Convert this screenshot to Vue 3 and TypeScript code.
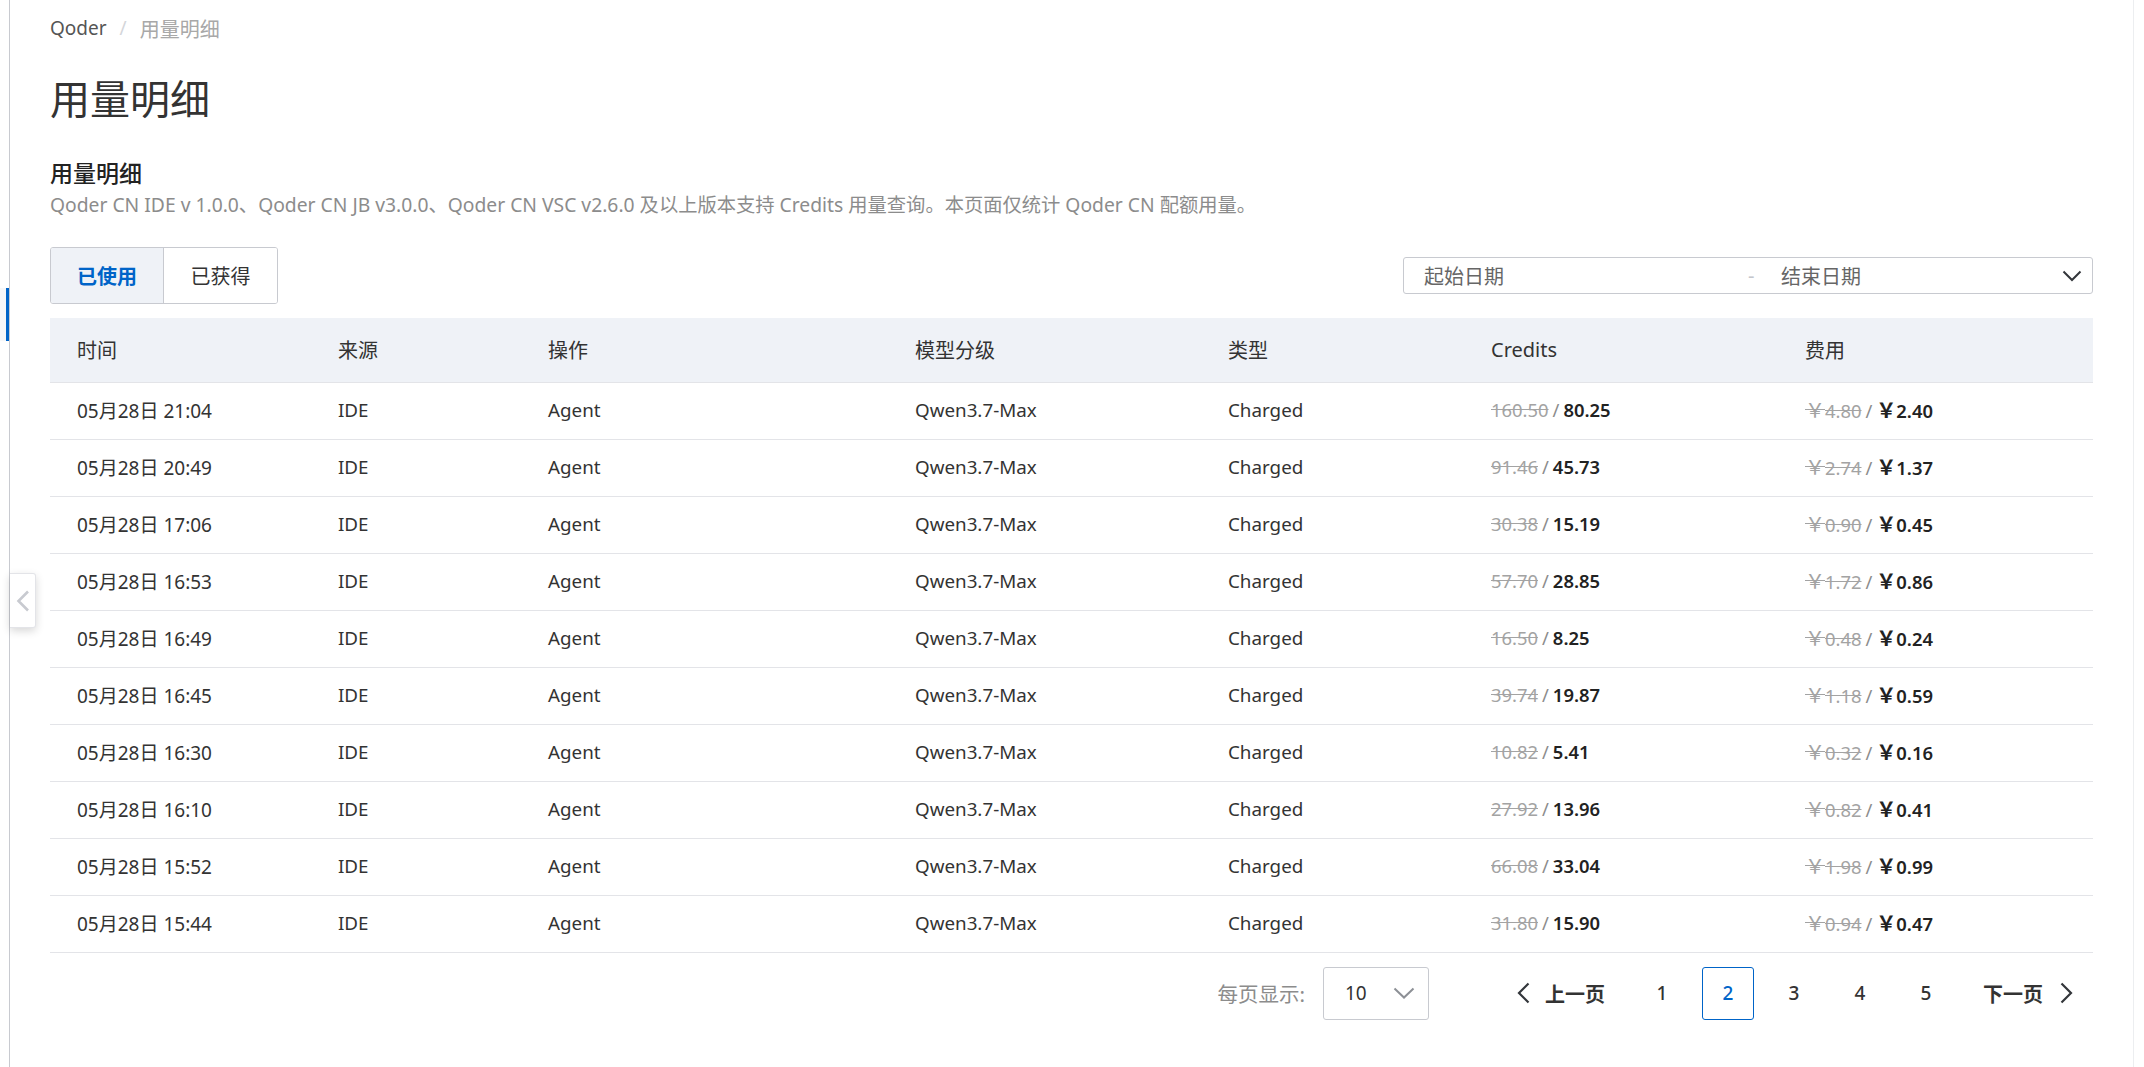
<script setup lang="ts">
interface UsageRow {
  time: string
  oldCredits: string
  credits: string
  oldFee: string
  fee: string
}

const columns = ['时间', '来源', '操作', '模型分级', '类型', 'Credits', '费用']

const rows: UsageRow[] = [
  { time: '05月28日 21:04', oldCredits: '160.50', credits: '80.25', oldFee: '4.80', fee: '2.40' },
  { time: '05月28日 20:49', oldCredits: '91.46', credits: '45.73', oldFee: '2.74', fee: '1.37' },
  { time: '05月28日 17:06', oldCredits: '30.38', credits: '15.19', oldFee: '0.90', fee: '0.45' },
  { time: '05月28日 16:53', oldCredits: '57.70', credits: '28.85', oldFee: '1.72', fee: '0.86' },
  { time: '05月28日 16:49', oldCredits: '16.50', credits: '8.25', oldFee: '0.48', fee: '0.24' },
  { time: '05月28日 16:45', oldCredits: '39.74', credits: '19.87', oldFee: '1.18', fee: '0.59' },
  { time: '05月28日 16:30', oldCredits: '10.82', credits: '5.41', oldFee: '0.32', fee: '0.16' },
  { time: '05月28日 16:10', oldCredits: '27.92', credits: '13.96', oldFee: '0.82', fee: '0.41' },
  { time: '05月28日 15:52', oldCredits: '66.08', credits: '33.04', oldFee: '1.98', fee: '0.99' },
  { time: '05月28日 15:44', oldCredits: '31.80', credits: '15.90', oldFee: '0.94', fee: '0.47' }
]

const pages = [1, 2, 3, 4, 5]
const currentPage = 2
</script>

<template>
  <div class="page">
    <aside class="rail">
      <div class="rail-active"></div>
      <button class="collapse" type="button">
        <svg width="14" height="22" viewBox="0 0 14 22"><path d="M12 1.500 2.500 11l9.500 9.500" fill="none" stroke="#c8cad0" stroke-width="2.600" /></svg>
      </button>
    </aside>

    <main class="content">
      <nav class="crumbs">
        <span>Qoder</span>
        <span class="crumb-sep">/</span>
        <span class="crumb-current">用量明细</span>
      </nav>
      <h1 class="title">用量明细</h1>
      <h2 class="subtitle">用量明细</h2>
      <p class="desc">Qoder CN IDE v 1.0.0、Qoder CN JB v3.0.0、Qoder CN VSC v2.6.0 及以上版本支持 Credits 用量查询。本页面仅统计 Qoder CN 配额用量。</p>

      <div class="toolbar">
        <div class="tabs">
          <button class="tab tab-on" type="button">已使用</button>
          <button class="tab" type="button">已获得</button>
        </div>
        <div class="range">
          <span class="range-start">起始日期</span>
          <span class="range-dash">-</span>
          <span class="range-end">结束日期</span>
          <svg width="20" height="12" viewBox="0 0 20 12"><path d="M1.500 1.500 10 10l8.500-8.500" fill="none" stroke="#33363b" stroke-width="2" /></svg>
        </div>
      </div>

      <table class="usage">
        <colgroup>
          <col class="col-time" />
          <col class="col-source" />
          <col class="col-action" />
          <col class="col-model" />
          <col class="col-type" />
          <col class="col-credits" />
          <col />
        </colgroup>
        <thead>
          <tr>
            <th v-for="col in columns" :key="col">{{ col }}</th>
          </tr>
        </thead>
        <tbody>
          <tr v-for="row in rows" :key="row.time">
            <td class="time">{{ row.time }}</td>
            <td>IDE</td>
            <td>Agent</td>
            <td>Qwen3.7-Max</td>
            <td>Charged</td>
            <td class="money"><s class="old">{{ row.oldCredits }}</s><span class="slash">/</span><b>{{ row.credits }}</b></td>
            <td class="money"><s class="old"><i class="yen">￥</i>{{ row.oldFee }}</s><span class="slash">/</span><b><i class="yen">￥</i>{{ row.fee }}</b></td>
          </tr>
        </tbody>
      </table>

      <div class="pager">
        <span class="pager-label">每页显示:</span>
        <div class="size-select">
          <span>10</span>
          <svg width="22" height="12" viewBox="0 0 22 12"><path d="M1.500 1.500 11 10.500l9.500-9" fill="none" stroke="#8d9096" stroke-width="2" /></svg>
        </div>
        <button class="nav prev" type="button">
          <svg width="13" height="22" viewBox="0 0 13 22"><path d="M11.500 1.500 2 11l9.500 9.500" fill="none" stroke="#33363b" stroke-width="2.200" /></svg>
          <span>上一页</span>
        </button>
        <button v-for="p in pages" :key="p" class="num" :class="{ 'num-on': p === currentPage }" type="button">{{ p }}</button>
        <button class="nav next" type="button">
          <span>下一页</span>
          <svg width="13" height="22" viewBox="0 0 13 22"><path d="M1.500 1.500 11 11l-9.500 9.500" fill="none" stroke="#33363b" stroke-width="2.200" /></svg>
        </button>
      </div>
    </main>
  </div>
</template>

<style>
html,
body {
  margin: 0;
  background: #fff;
}
</style>

<style scoped>
.page {
  display: flex;
  width: 2134px;
  height: 1067px;
  overflow: hidden;
  background: #fff;
  color: #333;
  font-family: "Noto Sans", "Noto Sans CJK SC", sans-serif;
  font-size: 19px;
  border-right: 1px solid #eceef0;
  box-sizing: border-box;
}
.rail {
  position: relative;
  flex: none;
  width: 9px;
  border-right: 1px solid #c8cad0;
  padding-top: 288px;
}
.rail-active {
  height: 53px;
  background: #f6f7f9;
  border-right: 3px solid #0064c8;
  box-sizing: border-box;
}
.collapse {
  position: absolute;
  left: 10px;
  top: 573px;
  width: 26px;
  height: 55px;
  padding: 0;
  background: #fff;
  border: 1px solid #e3e4e8;
  border-left: none;
  border-radius: 0 3px 3px 0;
  box-shadow: 0 3px 8px rgba(0, 0, 0, 0.16);
  display: flex;
  align-items: center;
  justify-content: center;
}
.content {
  flex: 1;
  min-width: 0;
  padding: 0 40px;
}
.crumbs {
  display: flex;
  align-items: center;
  height: 28px;
  margin-top: 14px;
  color: #555;
}
.crumb-sep {
  margin: 0 13px;
  color: #d4d6da;
}
.crumb-current {
  color: #a8a8a8;
  font-size: 20px;
}
.title {
  margin: 29px 0 0;
  font-size: 40px;
  line-height: 56px;
  font-weight: 400;
  color: #333;
}
.subtitle {
  margin: 31px 0 0;
  font-size: 23px;
  line-height: 30px;
  font-weight: 500;
  color: #222;
}
.desc {
  margin: 2px 0 0;
  font-size: 19.300px;
  line-height: 30px;
  color: #8c8c8c;
}
.toolbar {
  display: flex;
  align-items: center;
  justify-content: space-between;
  margin-top: 27px;
}
.tabs {
  display: flex;
  height: 57px;
  border: 1px solid #c8cad0;
  border-radius: 3px;
  box-sizing: border-box;
  overflow: hidden;
}
.tab {
  width: 113px;
  padding: 0;
  border: none;
  background: #fff;
  color: #333;
  font: inherit;
  font-size: 20px;
}
.tab-on {
  background: #eff2f7;
  border-right: 1px solid #c8cad0;
  color: #0064c8;
  font-weight: 700;
}
.range {
  display: flex;
  align-items: center;
  width: 690px;
  height: 37px;
  padding: 0 10px 0 20px;
  border: 1px solid #c8cad0;
  border-radius: 3px;
  box-sizing: border-box;
  color: #666;
  font-size: 20px;
}
.range-start {
  width: 324px;
}
.range-dash {
  width: 33px;
  color: #c4c6cc;
}
.range-end {
  flex: 1;
}
.usage {
  width: 100%;
  margin-top: 14px;
  border-collapse: collapse;
  table-layout: fixed;
}
.col-time {
  width: 261px;
}
.col-source {
  width: 210px;
}
.col-action {
  width: 367px;
}
.col-model {
  width: 313px;
}
.col-type {
  width: 263px;
}
.col-credits {
  width: 314px;
}
.usage th {
  height: 64px;
  padding: 0 0 0 27px;
  background: #eff2f7;
  border-bottom: 1px solid #e3e4e8;
  font-weight: 400;
  font-size: 20px;
  text-align: left;
  box-sizing: border-box;
}
.usage td {
  height: 57px;
  padding: 0 0 2px 27px;
  border-bottom: 1px solid #e3e4e8;
  font-size: 18.800px;
  white-space: nowrap;
  box-sizing: border-box;
}
.usage td.time {
  font-size: 19px;
}
.usage td.money {
  font-size: 18.400px;
}
.old {
  color: #a3a3a3;
}
.slash {
  margin: 0 4px;
  color: #8c8c8c;
}
.usage b {
  color: #222;
  font-weight: 600;
}
.yen {
  font-style: normal;
  font-size: 20px;
}
.pager {
  display: flex;
  align-items: center;
  justify-content: flex-end;
  margin-top: 14px;
}
.pager-label {
  color: #8c8c8c;
  margin-right: 18px;
  font-size: 20.500px;
}
.size-select {
  display: flex;
  align-items: center;
  justify-content: space-between;
  width: 106px;
  height: 53px;
  padding: 0 13px 0 21px;
  border: 1px solid #c8cad0;
  border-radius: 3px;
  box-sizing: border-box;
}
.nav {
  display: flex;
  align-items: center;
  padding: 0;
  border: none;
  background: none;
  font: inherit;
  font-size: 20px;
  font-weight: 700;
  color: #333;
}
.prev {
  gap: 15px;
  margin-left: 88px;
  margin-right: 24px;
}
.next {
  gap: 17px;
  margin-left: 24px;
  margin-right: 20px;
}
.num {
  width: 52px;
  height: 53px;
  margin: 0 7px;
  padding: 0;
  border: 1px solid transparent;
  border-radius: 3px;
  background: none;
  font: inherit;
  font-weight: 500;
  color: #333;
  box-sizing: border-box;
}
.num-on {
  border-color: #0064c8;
  color: #0064c8;
}
</style>
